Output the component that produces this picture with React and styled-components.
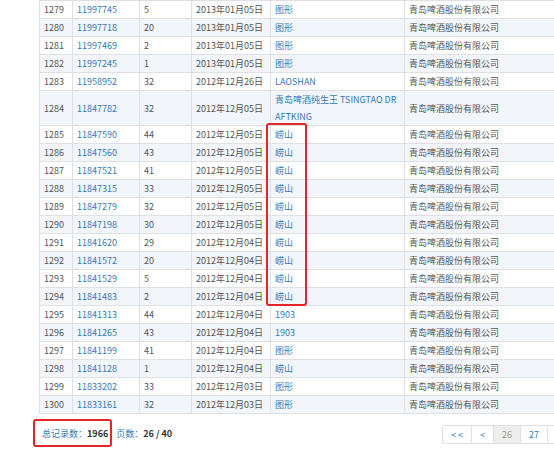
import React from 'react'
import styled, { createGlobalStyle } from 'styled-components'

const colors = {
  text: '#555',
  dark: '#333',
  link: '#337ab7',
  border: '#dde1e6',
  stripe: '#f2f5f9',
  red: '#e3262a',
  muted: '#999',
  disabled: '#eee',
}

const GlobalStyle = createGlobalStyle`
  html, body {
    margin: 0;
    padding: 0;
    overflow: hidden;
    background: #fff;
  }
  body {
    font-family: "Noto Sans CJK SC", "Noto Sans", sans-serif;
    font-size: 9px;
    color: ${colors.text};
  }
`

const Page = styled.div`
  width: 641px;
  padding-left: 39px;
`

const TableWrap = styled.div`
  position: relative;
`

const Table = styled.table`
  width: 100%;
  table-layout: fixed;
  border-collapse: collapse;
`

const Row = styled.tr`
  background: ${props => (props.striped ? colors.stripe : '#fff')};
`

const Cell = styled.td`
  border: 1px solid ${colors.border};
  padding: 0 4px;
  line-height: 17px;
  vertical-align: middle;
  white-space: nowrap;
`

const Link = styled.a`
  color: ${colors.link};
  text-decoration: none;
`

// red annotation drawn over the 崂山 cells
const Mark = styled.div`
  position: absolute;
  left: 227px;
  top: 123px;
  width: 41px;
  height: 183px;
  box-sizing: border-box;
  border: 2px solid ${colors.red};
  border-radius: 3px;
  pointer-events: none;
`

const Footer = styled.div`
  display: flex;
  justify-content: space-between;
  align-items: center;
  margin-left: -6px;
  padding-top: 5px;
`

const Summary = styled.div`
  display: flex;
  align-items: center;
  gap: 4px;
`

const Boxed = styled.span`
  display: inline-flex;
  align-items: center;
  height: 28px;
  box-sizing: border-box;
  padding: 0 2px 0 7px;
  border: 2px solid ${colors.red};
  border-radius: 3px;
`

const Label = styled.span`
  color: ${colors.link};
`

const Value = styled.b`
  color: ${colors.dark};
  font-weight: bold;
`

const Pager = styled.ul`
  display: flex;
  margin: 3px 0 0;
  padding: 0;
  list-style: none;
`

const PageItem = styled.li`
  height: 19px;
  box-sizing: border-box;
  padding: 0 8px;
  line-height: 17px;
  border: 1px solid ${colors.border};
  margin-left: -1px;
  color: ${props => (props.active ? colors.muted : colors.link)};
  background: ${props => (props.active ? colors.disabled : '#fff')};
  &:first-child {
    margin-left: 0;
    border-radius: 2px 0 0 2px;
  }
`

const COMPANY = '青岛啤酒股份有限公司'

const rows = [
  [1279, '11997745', 5, '2013年01月05日', '图形'],
  [1280, '11997718', 20, '2013年01月05日', '图形'],
  [1281, '11997469', 2, '2013年01月05日', '图形'],
  [1282, '11997245', 1, '2013年01月05日', '图形'],
  [1283, '11958952', 32, '2012年12月26日', 'LAOSHAN'],
  [1284, '11847782', 32, '2012年12月05日', ['青岛啤酒纯生王 TSINGTAO DR', 'AFTKING']],
  [1285, '11847590', 44, '2012年12月05日', '崂山'],
  [1286, '11847560', 43, '2012年12月05日', '崂山'],
  [1287, '11847521', 41, '2012年12月05日', '崂山'],
  [1288, '11847315', 33, '2012年12月05日', '崂山'],
  [1289, '11847279', 32, '2012年12月05日', '崂山'],
  [1290, '11847198', 30, '2012年12月05日', '崂山'],
  [1291, '11841620', 29, '2012年12月04日', '崂山'],
  [1292, '11841572', 20, '2012年12月04日', '崂山'],
  [1293, '11841529', 5, '2012年12月04日', '崂山'],
  [1294, '11841483', 2, '2012年12月04日', '崂山'],
  [1295, '11841313', 44, '2012年12月04日', '1903'],
  [1296, '11841265', 43, '2012年12月04日', '1903'],
  [1297, '11841199', 41, '2012年12月04日', '图形'],
  [1298, '11841128', 1, '2012年12月04日', '崂山'],
  [1299, '11833202', 33, '2012年12月03日', '图形'],
  [1300, '11833161', 32, '2012年12月03日', '图形'],
]

const pages = ['<<', '<', '26', '27', '28', '29', '30', '>', '>>']

const App = () => (
  <Page>
    <GlobalStyle />
    <TableWrap>
      <Table>
        <colgroup>
          <col style={{ width: 33 }} />
          <col style={{ width: 67 }} />
          <col style={{ width: 52 }} />
          <col style={{ width: 79 }} />
          <col style={{ width: 134 }} />
          <col />
        </colgroup>
        <tbody>
          {rows.map(([no, reg, cls, date, name]) => (
            <Row key={no} striped={no % 2 === 0}>
              <Cell>{no}</Cell>
              <Cell>
                <Link href="#">{reg}</Link>
              </Cell>
              <Cell>{cls}</Cell>
              <Cell>{date}</Cell>
              <Cell>
                <Link href="#">
                  {Array.isArray(name) ? (
                    <>
                      {name[0]}
                      <br />
                      {name[1]}
                    </>
                  ) : (
                    name
                  )}
                </Link>
              </Cell>
              <Cell>{COMPANY}</Cell>
            </Row>
          ))}
        </tbody>
      </Table>
      <Mark />
    </TableWrap>

    <Footer>
      <Summary>
        <Boxed>
          <Label>总记录数：</Label>
          <Value>1966</Value>
        </Boxed>
        <span>
          <Label>页数：</Label>
          <Value>26 / 40</Value>
        </span>
      </Summary>
      <Pager>
        {pages.map(p => (
          <PageItem key={p} active={p === '26'}>
            {p === '<<' ? '< <' : p === '>>' ? '> >' : p}
          </PageItem>
        ))}
      </Pager>
    </Footer>
  </Page>
)

export default App
